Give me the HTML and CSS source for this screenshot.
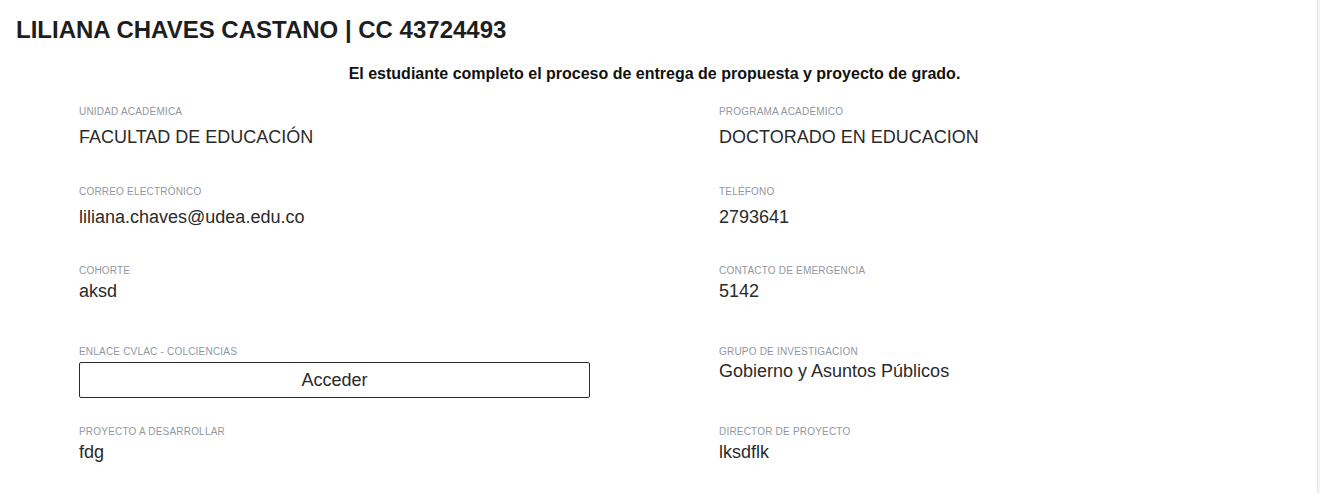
FILE: index.html
```html
<!DOCTYPE html>
<html lang="es">
<head>
<meta charset="utf-8">
<title>Estudiante</title>
<link rel="stylesheet" href="styles.css">
</head>
<body>
<div class="page">
  <h1 class="title">LILIANA CHAVES CASTANO | CC 43724493</h1>
  <p class="notice">El estudiante completo el proceso de entrega de propuesta y proyecto de grado.</p>
  <div class="grid">
    <div class="field field-lg">
      <div class="label">Unidad Académica</div>
      <div class="value">FACULTAD DE EDUCACIÓN</div>
    </div>
    <div class="field field-lg">
      <div class="label">Programa Académico</div>
      <div class="value">DOCTORADO EN EDUCACION</div>
    </div>
    <div class="field field-lg">
      <div class="label">Correo Electrónico</div>
      <div class="value">liliana.chaves@udea.edu.co</div>
    </div>
    <div class="field field-lg">
      <div class="label">Teléfono</div>
      <div class="value">2793641</div>
    </div>
    <div class="field field-md">
      <div class="label">Cohorte</div>
      <div class="value">aksd</div>
    </div>
    <div class="field field-md">
      <div class="label">Contacto de emergencia</div>
      <div class="value">5142</div>
    </div>
    <div class="field field-sm">
      <div class="label">Enlace CVLAC - Colciencias</div>
      <button class="btn" type="button">Acceder</button>
    </div>
    <div class="field field-xs">
      <div class="label">Grupo de investigacion</div>
      <div class="value">Gobierno y Asuntos Públicos</div>
    </div>
    <div class="field field-sm">
      <div class="label">Proyecto a desarrollar</div>
      <div class="value">fdg</div>
    </div>
    <div class="field field-sm">
      <div class="label">Director de proyecto</div>
      <div class="value">lksdflk</div>
    </div>
  </div>
</div>
</body>
</html>
```
FILE: styles.css
```css
html, body {
  margin: 0;
  padding: 0;
  background: #f4f4f4;
}
body {
  font-family: "Liberation Sans", Arial, sans-serif;
  color: #222;
}
.page {
  width: 1318px;
  height: 493px;
  box-sizing: border-box;
  background: #fff;
  border-right: 1px solid #e4e4e4;
  padding: 16px 16px 0;
  overflow: hidden;
}
.title {
  margin: 0;
  font-size: 24px;
  line-height: 28px;
  font-weight: bold;
  color: #1e1e1e;
}
.notice {
  margin: 20px 8px 0 0;
  font-size: 16px;
  line-height: 20px;
  font-weight: bold;
  text-align: center;
  color: #111;
}
.grid {
  margin: 22px 0 0 63px;
  display: grid;
  grid-template-columns: 640px 1fr;
  grid-template-rows: 80px 79px 81px 80px auto;
}
.label {
  font-size: 10px;
  line-height: 12px;
  letter-spacing: 0.2px;
  text-transform: uppercase;
  color: #8f989f;
}
.value {
  font-size: 18px;
  line-height: 22px;
  color: #2a2a2a;
}
.field-lg .value { margin-top: 8px; }
.field-md .value { margin-top: 3px; }
.field-sm .value { margin-top: 3px; }
.field-xs .value { margin-top: 2px; }
.btn {
  display: block;
  margin-top: 4px;
  width: 511px;
  height: 36px;
  box-sizing: border-box;
  border: 1px solid #2b2b2b;
  border-radius: 2px;
  background: #fff;
  font-family: "Liberation Sans", Arial, sans-serif;
  font-size: 18px;
  color: #2a2a2a;
  padding: 0;
}
```
